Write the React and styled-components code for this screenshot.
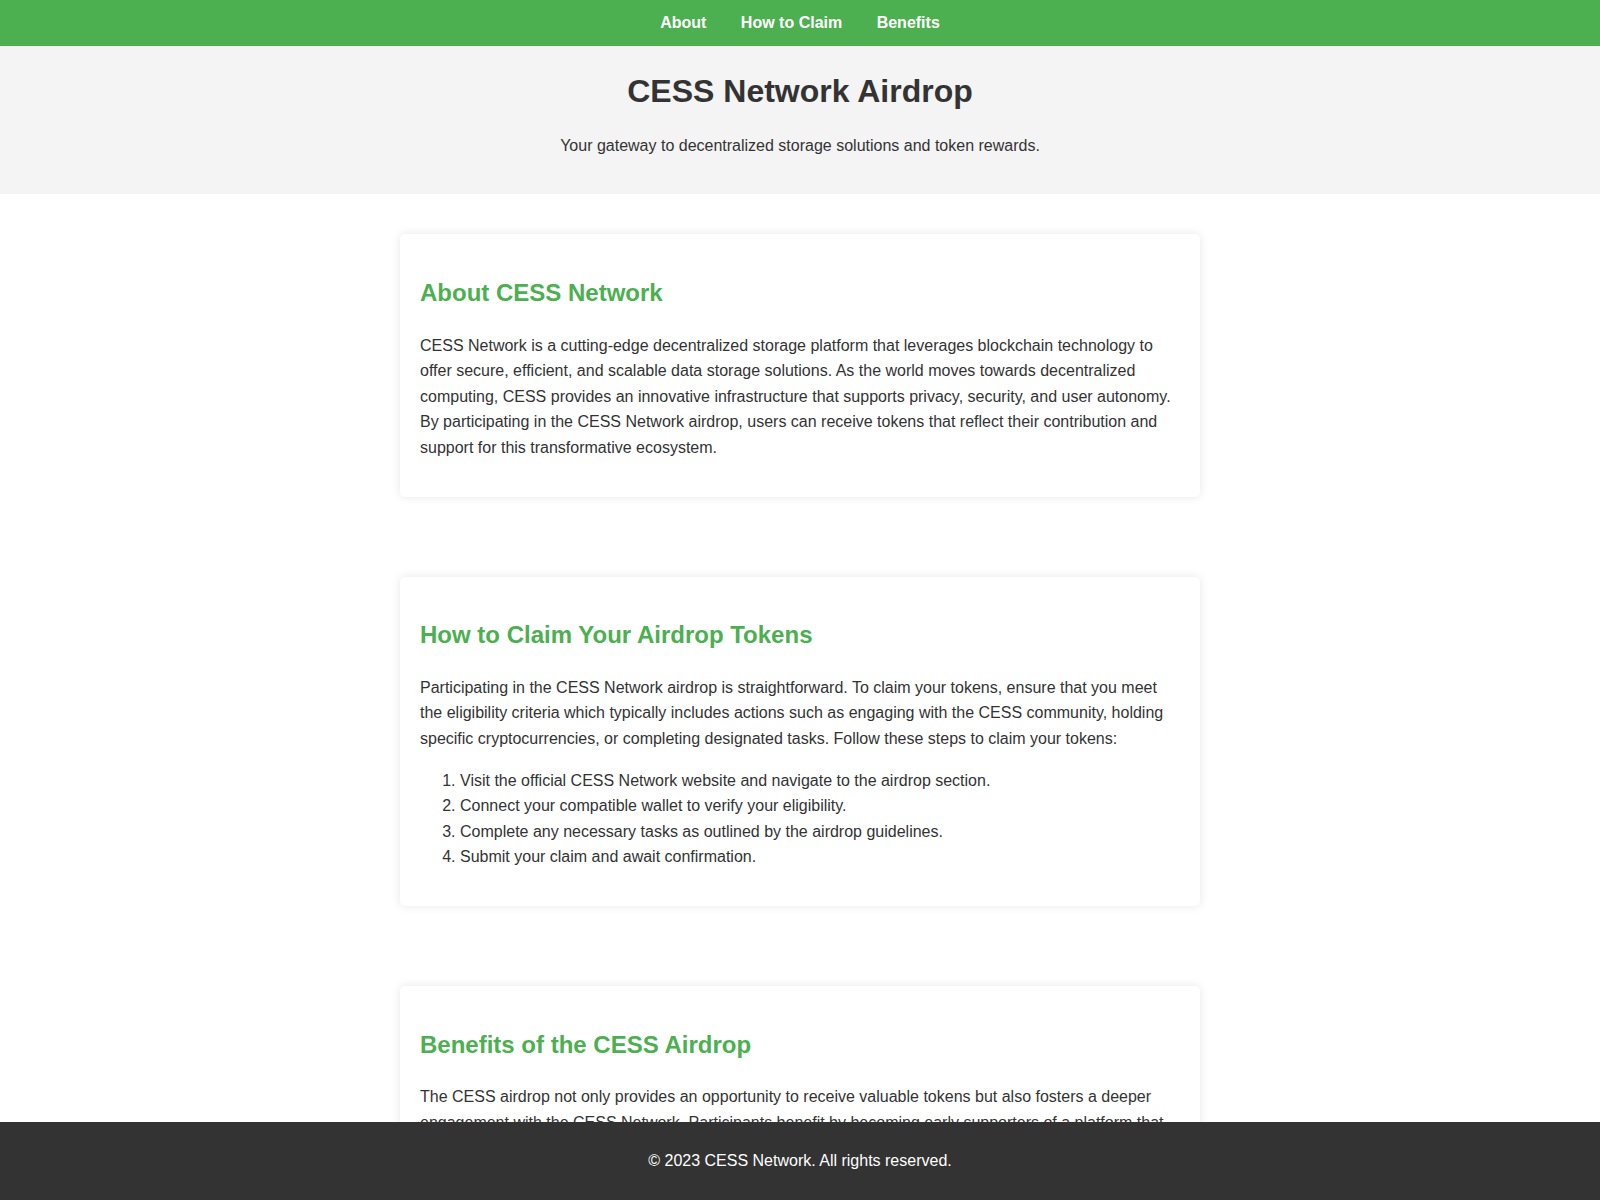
import React from "react";
import styled, { createGlobalStyle } from "styled-components";

const GlobalStyle = createGlobalStyle`
  body {
    margin: 0;
    font-family: "Liberation Sans", Arial, sans-serif;
    line-height: 1.6;
    color: #333;
    background: #fff;
  }
`;

const sections = [
  {
    id: "about",
    title: "About CESS Network",
    text: [
      "CESS Network is a cutting-edge decentralized storage platform that leverages blockchain technology to offer secure, efficient, and scalable data storage solutions. As the world moves towards decentralized computing, CESS provides an innovative infrastructure that supports privacy, security, and user autonomy. By participating in the CESS Network airdrop, users can receive tokens that reflect their contribution and support for this transformative ecosystem.",
    ],
  },
  {
    id: "claim",
    title: "How to Claim Your Airdrop Tokens",
    text: [
      "Participating in the CESS Network airdrop is straightforward. To claim your tokens, ensure that you meet the eligibility criteria which typically includes actions such as engaging with the CESS community, holding specific cryptocurrencies, or completing designated tasks. Follow these steps to claim your tokens:",
    ],
    steps: [
      "Visit the official CESS Network website and navigate to the airdrop section.",
      "Connect your compatible wallet to verify your eligibility.",
      "Complete any necessary tasks as outlined by the airdrop guidelines.",
      "Submit your claim and await confirmation.",
    ],
  },
  {
    id: "benefits",
    title: "Benefits of the CESS Airdrop",
    text: [
      "The CESS airdrop not only provides an opportunity to receive valuable tokens but also fosters a deeper engagement with the CESS Network. Participants benefit by becoming early supporters of a platform that aims to redefine how data is stored and shared, gaining access to governance rights, staking rewards, and a growing community of builders.",
    ],
  },
];

export default function App() {
  return (
    <>
      <GlobalStyle />
      <Nav>
        <NavLink href="#about">About</NavLink>{" "}
        <NavLink href="#claim">How to Claim</NavLink>{" "}
        <NavLink href="#benefits">Benefits</NavLink>
      </Nav>

      <Hero>
        <Title>CESS Network Airdrop</Title>
        <Tagline>Your gateway to decentralized storage solutions and token rewards.</Tagline>
      </Hero>

      <Main>
        {sections.map((s) => (
          <Card key={s.id} id={s.id}>
            <CardTitle>{s.title}</CardTitle>
            {s.text.map((t, i) => (
              <Paragraph key={i}>{t}</Paragraph>
            ))}
            {s.steps && (
              <Steps>
                {s.steps.map((step) => (
                  <li key={step}>{step}</li>
                ))}
              </Steps>
            )}
          </Card>
        ))}
      </Main>

      <Footer>
        <Paragraph>© 2023 CESS Network. All rights reserved.</Paragraph>
      </Footer>
    </>
  );
}

// =========================== STYLES ============================= //

const Nav = styled.nav`
  background: #4caf50;
  padding: 10px 0;
  text-align: center;
`;

const NavLink = styled.a`
  color: #fff;
  font-weight: bold;
  text-decoration: none;
  margin: 0 15px;
`;

const Hero = styled.header`
  background: #f4f4f4;
  padding: 20px 0;
  text-align: center;
`;

const Title = styled.h1`
  margin: 0;
  font-size: 32px;
`;

const Tagline = styled.p`
  margin: 16px 0;
`;

const Main = styled.main`
  display: flex;
  flex-direction: column;
  align-items: center;
  gap: 80px;
  padding: 40px 20px 120px;
`;

const Card = styled.section`
  box-sizing: border-box;
  width: 100%;
  max-width: 800px;
  background: #fff;
  padding: 20px;
  border-radius: 5px;
  box-shadow: 0 0 10px rgba(0, 0, 0, 0.1);
`;

const CardTitle = styled.h2`
  color: #4caf50;
  font-size: 24px;
  margin: 0.83em 0;
`;

const Paragraph = styled.p`
  margin: 16px 0;
`;

const Steps = styled.ol`
  margin: 16px 0;
  padding-left: 40px;
`;

const Footer = styled.footer`
  position: fixed;
  left: 0;
  right: 0;
  bottom: 0;
  background: #333;
  color: #fff;
  text-align: center;
  padding: 10px 0;
`;
